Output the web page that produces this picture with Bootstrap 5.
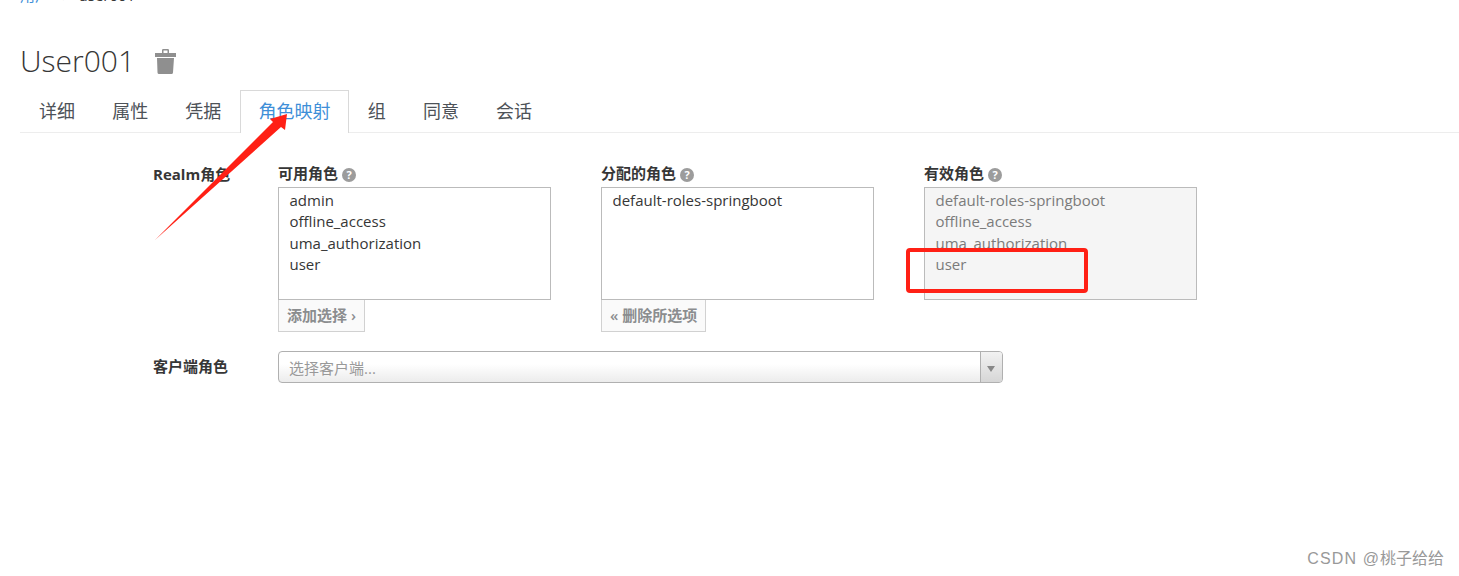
<!DOCTYPE html>
<html lang="zh-CN">
<head>
<meta charset="utf-8">
<title>User001</title>
<link rel="stylesheet" href="https://cdn.jsdelivr.net/npm/bootstrap@5.3.0/dist/css/bootstrap.min.css">
<style>
html,body{height:576px;overflow:hidden;background:#fff}
body{font-family:"Open Sans","Noto Sans CJK SC",sans-serif;color:#363636;font-size:15px;position:relative}
.crumb{height:53px;margin-top:-15px;padding-left:20px;font-size:15px;line-height:20px;color:#363636}
.crumb a{color:#3f8fd8;text-decoration:none}
.crumb-sep{margin:0 12px;color:#9c9c9c}
.page-head{padding-left:20px;height:45px;align-items:center;gap:20px}
.page-head h1{font-size:30px;font-weight:300;line-height:40px;margin:0;color:#363636}
.page-head svg{margin-top:2px}
.tabbar{margin:7px 0 0 20px;padding-left:.4px;border-bottom:1px solid #ededed;height:43px;list-style:none}
.tabbar a{display:block;height:43px;padding:10px 17.6px 0;border:1px solid transparent;border-bottom:0;font-size:18px;line-height:21px;color:#4d5258;text-decoration:none}
.tabbar .on a{border-color:#d9d9d9;background:#fff;color:#3f8fd8}
.formrow{padding-left:153px}
.formrow-first{margin-top:31px}
.formrow-second{margin-top:19px}
.rowlabel{width:125px;font-weight:700;font-size:15px;line-height:20px;color:#363636}
.rowlabel-tall{line-height:30px}
.pickers{gap:50px}
.picker{width:273px}
.pick-title{font-weight:700;font-size:15px;line-height:18px;height:23px;color:#363636}
.hint{display:inline-block;width:14px;height:14px;border-radius:50%;background:#9c9c9c;color:#fff;font-size:11px;font-weight:700;line-height:14px;text-align:center;margin-left:4px;vertical-align:0}
.rolebox{height:113px;border:1px solid #bbb;background:#fff;margin:0;padding:2px 0 0 10.5px;list-style:none;font-size:15px;line-height:21.3px;color:#363636}
.rolebox.off{background:#f5f5f5;color:#7b7b7b}
.mini{display:block;height:32px;border:1px solid #d1d1d1;background:#fafafa;border-top:0;padding:0 8px 2px;font-size:15px;font-weight:600;line-height:20px;color:#8b8d8f;border-radius:0}
.clientsel{width:725px;height:32px;border:1px solid #b0b0b0;border-radius:4px;background:linear-gradient(#fff 40%,#ececec);color:#999;font-size:15px;line-height:32px;padding-left:10px;overflow:hidden}
.clientsel .dd{width:22px;height:30px;padding-top:3px;padding-right:1px;border-left:1px solid #b0b0b0;background:linear-gradient(#f2f2f2,#d6d6d6)}
.dd i{width:0;height:0;border:4px solid transparent;border-top:6px solid #888;border-bottom:0;display:block}
.wm{position:absolute;right:15px;top:548px;font-size:16px;line-height:22px;color:#999;font-family:"Liberation Sans","Noto Sans CJK SC",sans-serif}
.wm span{letter-spacing:1.1px}
.ann{position:absolute;left:0;top:0;pointer-events:none}
</style>
</head>
<body>
<div class="crumb"><a href="#">用户</a><span class="crumb-sep">›</span>user001</div>
<div class="page-head d-flex">
  <h1>User001</h1>
  <svg width="21" height="25" viewBox="0 0 21 25" aria-label="删除"><path fill="#8f8f8f" d="M0 4h7V1.200Q7 0 8.200 0h4.600Q14 0 14 1.200V4h7v4H0zM8.500 4h4V1.500h-4zM2 9h17l-1 14.500q-.1 1.500-1.500 1.500h-12.500q-1.400 0-1.500-1.500z"/></svg>
</div>
<ul class="tabbar d-flex">
  <li><a href="#">详细</a></li>
  <li><a href="#">属性</a></li>
  <li><a href="#">凭据</a></li>
  <li class="on"><a href="#">角色映射</a></li>
  <li><a href="#">组</a></li>
  <li><a href="#">同意</a></li>
  <li><a href="#">会话</a></li>
</ul>
<div class="formrow formrow-first d-flex">
  <div class="rowlabel">Realm角色</div>
  <div class="pickers d-flex">
    <div class="picker">
      <div class="pick-title">可用角色<span class="hint">?</span></div>
      <ul class="rolebox"><li>admin</li><li>offline_access</li><li>uma_authorization</li><li>user</li></ul>
      <button type="button" class="mini">添加选择 ›</button>
    </div>
    <div class="picker">
      <div class="pick-title">分配的角色<span class="hint">?</span></div>
      <ul class="rolebox"><li>default-roles-springboot</li></ul>
      <button type="button" class="mini">« 删除所选项</button>
    </div>
    <div class="picker">
      <div class="pick-title">有效角色<span class="hint">?</span></div>
      <ul class="rolebox off"><li>default-roles-springboot</li><li>offline_access</li><li>uma_authorization</li><li>user</li></ul>
    </div>
  </div>
</div>
<div class="formrow formrow-second d-flex">
  <div class="rowlabel rowlabel-tall">客户端角色</div>
  <div class="clientsel d-flex justify-content-between">
    <span>选择客户端...</span>
    <span class="dd d-flex align-items-center justify-content-center"><i></i></span>
  </div>
</div>
<div class="wm"><span>CSDN @</span>桃子给给</div>
<svg class="ann" width="1459" height="576" aria-hidden="true">
  <polygon fill="#ff2015" points="155,240 273,122 270,119 287,114 285,130 281,127"/>
  <rect x="908" y="250" width="178" height="41" rx="2" fill="none" stroke="#ff2015" stroke-width="4"/>
</svg>
<script src="https://cdn.jsdelivr.net/npm/bootstrap@5.3.0/dist/js/bootstrap.bundle.min.js"></script>
</body>
</html>
